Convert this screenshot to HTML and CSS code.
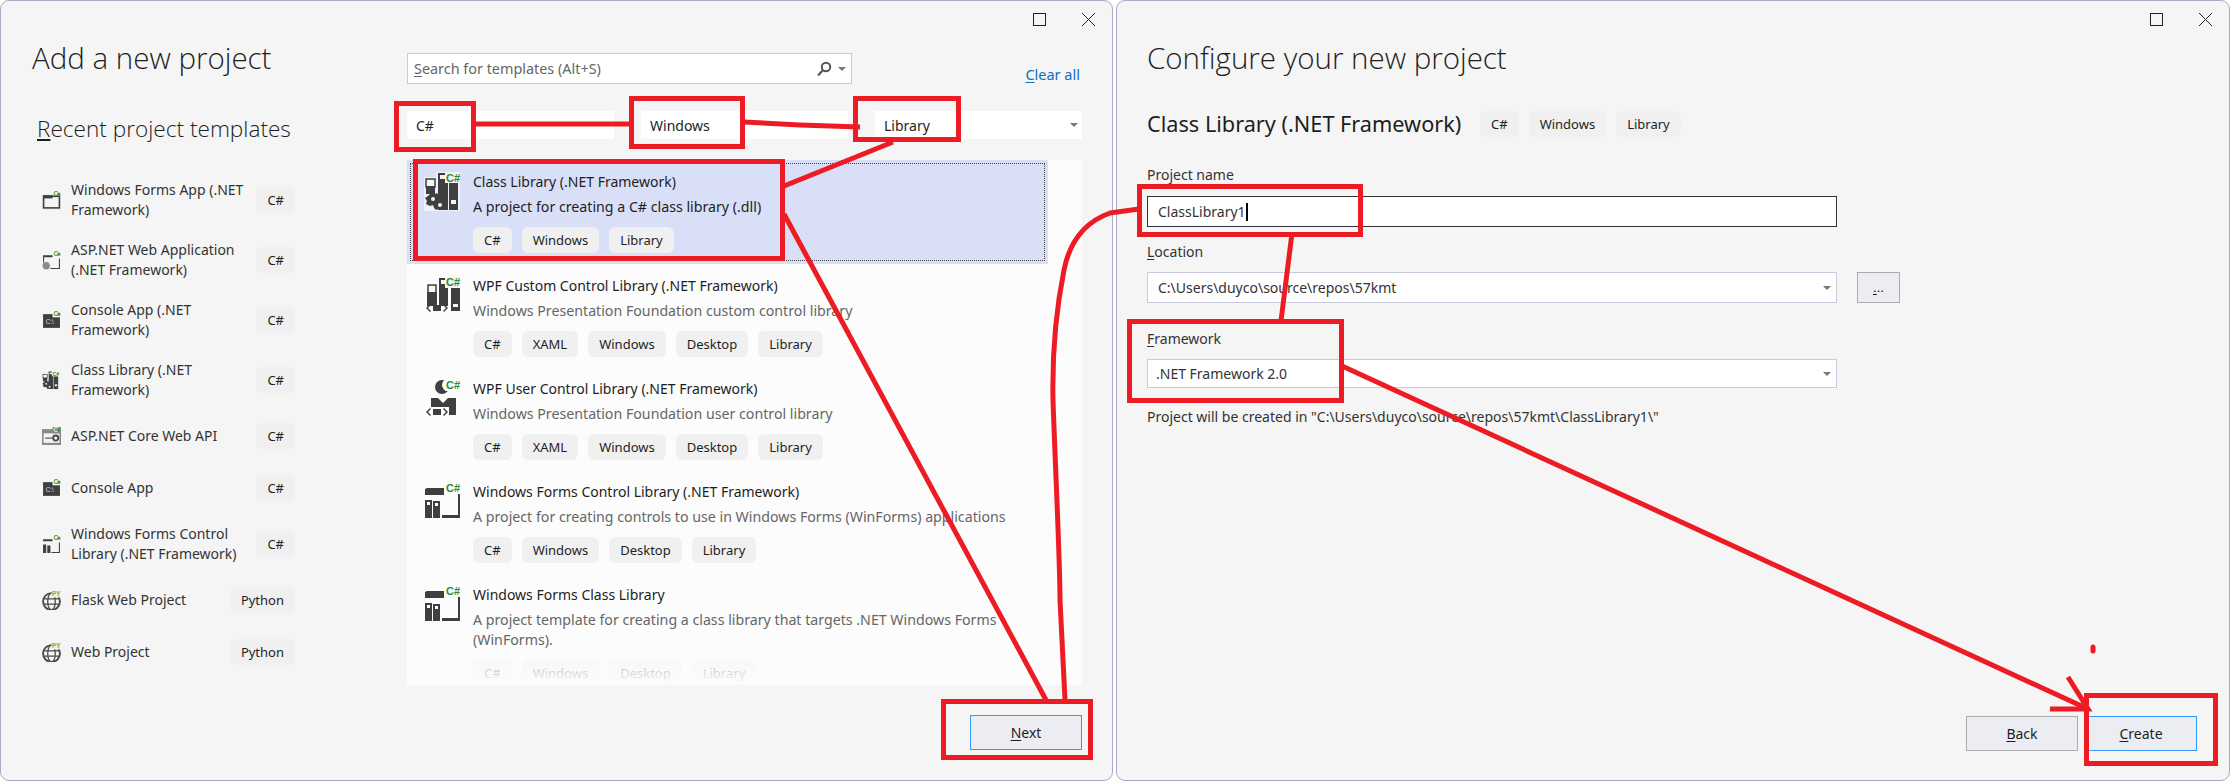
FILE: index.html
```html
<!DOCTYPE html>
<html lang="en">
<head>
  <meta charset="UTF-8" />
  <title>Add a new project</title>
  <link rel="stylesheet" href="styles.css">
</head>
<body>
  <!-- icon set -->
  <svg class="defs" aria-hidden="true">
    <symbol id="lib-lg" viewBox="0 0 40 40">
      <path class="halo" d="M0 5h12V0h24v39H0z"/>
      <rect class="hollow" x="2" y="7" width="9" height="8"/>
      <rect class="ink" x="2" y="14" width="9" height="8"/>
      <path class="ink" d="M14 1h7v2h-5v4h8v31h-10z"/>
      <rect class="ink" x="25" y="11" width="9" height="27"/>
      <rect class="light" x="27" y="28" width="5" height="4"/>
      <path class="ink" d="M8 20l3 2 2-1 2 3 3-1 1 4-2 2 4 1 1 4-3 1-1 3-4-1-2 1-2-2-1-3-3 1-4-2 1-3-2-3 3-2z"/>
      <circle class="light" cx="9" cy="27" r="2"/>
      <circle class="light" cx="16" cy="33" r="2"/>
      <rect class="light" x="21" y="0" width="15" height="11"/>
      <text class="badge" x="22" y="9.5">C#</text>
    </symbol>
    <symbol id="wpf-custom" viewBox="0 0 40 40">
      <rect class="hollow" x="4" y="9" width="8" height="8"/>
      <rect class="ink" x="3" y="16" width="10" height="14"/>
      <path class="ink" d="M15 2h6v2h-4v4h7v22H15z"/>
      <rect class="ink" x="27" y="12" width="9" height="23"/>
      <rect class="light" x="29" y="28" width="5" height="3"/>
      <path class="ink" d="M6 28l-4 4 4 4 1-1-3-3 3-3zM20 28l-1 1 3 3-3 3 1 1 4-4zM9 29h8v6H9z"/>
      <rect class="light" x="21" y="1" width="15" height="11"/>
      <text class="badge" x="22" y="10">C#</text>
    </symbol>
    <symbol id="wpf-user" viewBox="0 0 40 40">
      <circle class="ink" cx="18" cy="8" r="7"/>
      <circle class="plain" cx="24" cy="6" r="6"/>
      <path class="ink" d="M7 19h7l5 5 5-5h8v17H7z"/>
      <path class="plain" d="M0 28h25v9H0z"/>
      <path class="ink" d="M6 29l-4 4 4 4 1-1-3-3 3-3zM20 29l-1 1 3 3-3 3 1 1 4-4zM9 30h8v6H9z"/>
      <rect class="plain" x="21" y="1" width="15" height="11"/>
      <text class="badge" x="22" y="10">C#</text>
    </symbol>
    <symbol id="forms" viewBox="0 0 40 40">
      <path class="ink" d="M1 7l2-1h17v7H1z"/>
      <path class="ink" d="M34 12h2v24H18v-3h16z"/>
      <path class="ink" d="M1 18h7v18H1zM9 19h7v17H9z"/>
      <rect class="plain" x="3" y="20" width="3" height="3"/>
      <rect class="plain" x="11" y="21" width="3" height="3"/>
      <rect class="plain" x="21" y="1" width="15" height="11"/>
      <text class="badge" x="22" y="10">C#</text>
    </symbol>

    <symbol id="sm-window" viewBox="0 0 18 18">
      <rect class="soft" x="0" y="3" width="18" height="15"/>
      <rect class="hollow" x="1.5" y="5" width="15" height="11"/>
      <rect class="ink" x="1" y="4" width="9" height="3"/>
      <text class="badge-sm" x="11" y="5">C</text><circle class="dot" cx="16" cy="3" r="1.5"/>
    </symbol>
    <symbol id="sm-web" viewBox="0 0 18 18">
      <path class="ink" d="M1 4h9v2H2v5H1zM16 7h1v10H8v-1h8z"/>
      <circle class="mid" cx="4" cy="14" r="3.5"/>
      <text class="badge-sm" x="11" y="5">C</text><circle class="dot" cx="16" cy="3" r="1.5"/>
    </symbol>
    <symbol id="sm-console" viewBox="0 0 18 18">
      <rect class="ink" x="1" y="3" width="16" height="13"/>
      <text class="console-txt" x="3.5" y="12">C:\</text>
      <rect class="light" x="10" y="0" width="8" height="6"/>
      <text class="badge-sm" x="11" y="5">C</text><circle class="dot" cx="16" cy="3" r="1.5"/>
    </symbol>
    <symbol id="sm-key" viewBox="0 0 18 18">
      <rect class="mid" x="0" y="2" width="18" height="15"/>
      <rect class="light" x="1.5" y="6" width="15" height="9"/>
      <path class="ink" d="M3 10h7v1H3z"/>
      <circle class="ring" cx="13" cy="10.5" r="2.4"/>
      <rect class="mid" x="10" y="0" width="8" height="6"/>
      <text class="badge-lt" x="11" y="5">C</text><circle class="dot" cx="16" cy="3" r="1.5"/>
    </symbol>
    <symbol id="sm-forms" viewBox="0 0 18 18">
      <path class="ink" d="M1 4h9v2H1zM16 7h1v10H9v-1h7z"/>
      <path class="ink" d="M1 9h3v8H1zM5 10h3v7H5z"/>
      <text class="badge-sm" x="11" y="5">C</text><circle class="dot" cx="16" cy="3" r="1.5"/>
    </symbol>
    <symbol id="sm-globe" viewBox="0 0 18 18">
      <circle class="ring" cx="9" cy="10" r="8"/>
      <ellipse class="ring-thin" cx="9" cy="10" rx="3.6" ry="8"/>
      <path class="ring-thin" d="M1 7.500h16M1 12.500h16"/>
      <rect class="soft" x="9" y="0" width="9" height="6"/>
      <text class="badge-py" x="9.500" y="5">PY</text>
    </symbol>
  </svg>

  <section class="window window-add">
    <div class="win-bar">
      <span class="win-max"></span>
      <svg class="win-close" viewBox="0 0 13 13"><path d="M0 0l13 13M13 0L0 13"/></svg>
    </div>
    <div class="add-body">
      <div class="recent">
        <h1>Add a new project</h1>
        <h2><u>R</u>ecent project templates</h2>
        <ul class="recent-list">
          <li class="recent-item">
            <svg class="sm-icon"><use href="#sm-window"/></svg>
            <span class="recent-name">Windows Forms App (.NET<br>Framework)</span>
            <span class="chip">C#</span>
          </li>
          <li class="recent-item">
            <svg class="sm-icon"><use href="#sm-web"/></svg>
            <span class="recent-name">ASP.NET Web Application<br>(.NET Framework)</span>
            <span class="chip">C#</span>
          </li>
          <li class="recent-item">
            <svg class="sm-icon"><use href="#sm-console"/></svg>
            <span class="recent-name">Console App (.NET<br>Framework)</span>
            <span class="chip">C#</span>
          </li>
          <li class="recent-item">
            <svg class="sm-icon"><use href="#lib-lg"/></svg>
            <span class="recent-name">Class Library (.NET<br>Framework)</span>
            <span class="chip">C#</span>
          </li>
          <li class="recent-item">
            <svg class="sm-icon"><use href="#sm-key"/></svg>
            <span class="recent-name">ASP.NET Core Web API</span>
            <span class="chip">C#</span>
          </li>
          <li class="recent-item">
            <svg class="sm-icon"><use href="#sm-console"/></svg>
            <span class="recent-name">Console App</span>
            <span class="chip">C#</span>
          </li>
          <li class="recent-item">
            <svg class="sm-icon"><use href="#sm-forms"/></svg>
            <span class="recent-name">Windows Forms Control<br>Library (.NET Framework)</span>
            <span class="chip">C#</span>
          </li>
          <li class="recent-item">
            <svg class="sm-icon"><use href="#sm-globe"/></svg>
            <span class="recent-name">Flask Web Project</span>
            <span class="chip">Python</span>
          </li>
          <li class="recent-item">
            <svg class="sm-icon"><use href="#sm-globe"/></svg>
            <span class="recent-name">Web Project</span>
            <span class="chip">Python</span>
          </li>
        </ul>
      </div>

      <div class="browse">
        <div class="search-row">
          <div class="search">
            <span class="search-text"><u>S</u>earch for templates (Alt+S)</span>
            <svg class="search-icon" viewBox="0 0 18 16">
              <circle cx="11" cy="6" r="4.200"/>
              <path d="M8 9l-5 5.500"/>
            </svg>
            <span class="caret"></span>
          </div>
          <a class="clear-all"><u>C</u>lear all</a>
        </div>
        <div class="filters">
          <div class="combo">C#</div>
          <div class="combo">Windows</div>
          <div class="combo">Library<span class="caret"></span></div>
        </div>
        <div class="templates">
          <article class="tpl tpl-selected">
            <svg class="tpl-icon"><use href="#lib-lg"/></svg>
            <div>
              <div class="tpl-name">Class Library (.NET Framework)</div>
              <p class="tpl-desc">A project for creating a C# class library (.dll)</p>
              <div class="chips"><span class="chip">C#</span><span class="chip">Windows</span><span class="chip">Library</span></div>
            </div>
          </article>
          <article class="tpl">
            <svg class="tpl-icon"><use href="#wpf-custom"/></svg>
            <div>
              <div class="tpl-name">WPF Custom Control Library (.NET Framework)</div>
              <p class="tpl-desc tpl-desc-gray">Windows Presentation Foundation custom control library</p>
              <div class="chips"><span class="chip">C#</span><span class="chip">XAML</span><span class="chip">Windows</span><span class="chip">Desktop</span><span class="chip">Library</span></div>
            </div>
          </article>
          <article class="tpl">
            <svg class="tpl-icon"><use href="#wpf-user"/></svg>
            <div>
              <div class="tpl-name">WPF User Control Library (.NET Framework)</div>
              <p class="tpl-desc tpl-desc-gray">Windows Presentation Foundation user control library</p>
              <div class="chips"><span class="chip">C#</span><span class="chip">XAML</span><span class="chip">Windows</span><span class="chip">Desktop</span><span class="chip">Library</span></div>
            </div>
          </article>
          <article class="tpl">
            <svg class="tpl-icon"><use href="#forms"/></svg>
            <div>
              <div class="tpl-name">Windows Forms Control Library (.NET Framework)</div>
              <p class="tpl-desc tpl-desc-gray">A project for creating controls to use in Windows Forms (WinForms) applications</p>
              <div class="chips"><span class="chip">C#</span><span class="chip">Windows</span><span class="chip">Desktop</span><span class="chip">Library</span></div>
            </div>
          </article>
          <article class="tpl">
            <svg class="tpl-icon"><use href="#forms"/></svg>
            <div>
              <div class="tpl-name">Windows Forms Class Library</div>
              <p class="tpl-desc tpl-desc-gray">A project template for creating a class library that targets .NET Windows Forms<br>(WinForms).</p>
              <div class="chips"><span class="chip">C#</span><span class="chip">Windows</span><span class="chip">Desktop</span><span class="chip">Library</span></div>
            </div>
          </article>
        </div>
        <div class="actions">
          <button class="btn btn-primary"><u>N</u>ext</button>
        </div>
      </div>
    </div>
  </section>

  <section class="window window-config">
    <div class="win-bar">
      <span class="win-max"></span>
      <svg class="win-close" viewBox="0 0 13 13"><path d="M0 0l13 13M13 0L0 13"/></svg>
    </div>
    <div class="config-body">
      <h1>Configure your new project</h1>
      <div class="config-sub">
        <h3>Class Library (.NET Framework)</h3>
        <div class="chips"><span class="chip">C#</span><span class="chip">Windows</span><span class="chip">Library</span></div>
      </div>
      <label class="field-label field-name">Project name</label>
      <div class="input input-focus">ClassLibrary1<span class="text-caret"></span></div>
      <label class="field-label"><u>L</u>ocation</label>
      <div class="location-row">
        <div class="input input-combo">C:\Users\duyco\source\repos\57kmt<span class="caret"></span></div>
        <button class="btn-browse"><u>.</u>..</button>
      </div>
      <label class="field-label field-framework"><u>F</u>ramework</label>
      <div class="input input-combo input-framework">.NET Framework 2.0<span class="caret"></span></div>
      <p class="created-in">Project will be created in "C:\Users\duyco\source\repos\57kmt\ClassLibrary1\"</p>
      <div class="actions config-actions">
        <button class="btn"><u>B</u>ack</button>
        <button class="btn btn-primary"><u>C</u>reate</button>
      </div>
    </div>
  </section>

  <!-- red marker drawn over the screenshot -->
  <svg class="markup" viewBox="0 0 2230 782">
    <rect x="396.500" y="103.500" width="77" height="46"/>
    <rect x="631.500" y="98.500" width="111" height="48"/>
    <rect x="855.500" y="98.500" width="103" height="41"/>
    <rect x="415.500" y="161.500" width="367" height="97"/>
    <rect x="943.500" y="701.500" width="147" height="56"/>
    <rect x="1139.500" y="186.500" width="221" height="48"/>
    <rect x="1129.500" y="321.500" width="212" height="79"/>
    <rect x="2086.500" y="695.500" width="129" height="68"/>
    <path d="M474 124H630"/>
    <path d="M744 122L800 125L860 127"/>
    <path d="M893 142L784 186"/>
    <path d="M784 214L1046 700"/>
    <path d="M1139 209L1110 213C1085 222 1070 240 1064 270C1056 310 1052 350 1053 400C1055 460 1060 560 1060 600L1065 700"/>
    <path d="M1292 233L1281 321"/>
    <path d="M1342 366L2088 709"/>
    <path d="M2068 677L2088 709L2050 709"/>
    <path class="blot" d="M2093 647v4"/>
  </svg>
</body>
</html>
```

FILE: styles.css
```css
* {
  box-sizing: border-box;
}

html, body {
  margin: 0;
  padding: 0;
}

body {
  position: relative;
  display: flex;
  width: 2230px;
  height: 782px;
  overflow: hidden;
  background: #fff;
  color: #1e1e1e;
  font-family: "Noto Sans", sans-serif;
  font-size: 14px;
}

h1, h2, h3, p, ul {
  margin: 0;
  padding: 0;
  font-weight: 400;
}

u {
  text-underline-offset: 2px;
}

.defs {
  display: none;
}

/* windows */
.window {
  display: flex;
  flex-direction: column;
  height: 781px;
  background: #f5f5f5;
  border: 1px solid #a9a9c9;
  border-radius: 9px;
}

.window-add {
  width: 1113px;
}

.window-config {
  width: 1114px;
  margin-left: 3px;
}

.win-bar {
  display: flex;
  justify-content: flex-end;
  align-items: flex-start;
  gap: 36px;
  height: 37px;
  padding: 12px 17px 0 0;
  flex-shrink: 0;
}

.win-max {
  width: 13px;
  height: 13px;
  border: 1.5px solid #222;
}

.win-close {
  width: 13px;
  height: 13px;
  fill: none;
  stroke: #222;
  stroke-width: 1;
}

h1 {
  height: 40px;
  margin-top: 2px;
  font-family: "Open Sans", sans-serif;
  font-size: 29.500px;
  font-weight: 300;
  line-height: 36px;
  white-space: nowrap;
}

.add-body {
  display: flex;
  flex: 1;
}

/* recent column */
.recent {
  width: 406px;
  padding-left: 31px;
  flex-shrink: 0;
}

h2 {
  margin: 34px 0 0 5px;
  font-size: 22.600px;
  line-height: 30px;
  font-weight: 300;
  font-family: "Open Sans", sans-serif;
  white-space: nowrap;
}

.recent-list {
  list-style: none;
  margin-top: 26px;
  width: 263px;
}

.recent-item {
  display: flex;
  align-items: center;
  min-height: 52px;
  padding: 10px 0 10px 10px;
}

.sm-icon {
  width: 19px;
  height: 19px;
  margin-right: 10px;
  flex-shrink: 0;
}

.recent-name {
  flex: 1;
  font-size: 14px;
  line-height: 20px;
  white-space: nowrap;
  color: #333;
}

.chip {
  display: inline-block;
  height: 26px;
  padding: 0 11px;
  background: #f0f0f0;
  border-radius: 6px;
  font-size: 13px;
  line-height: 26px;
  white-space: nowrap;
}

/* template browser */
.browse {
  display: flex;
  flex-direction: column;
  width: 675px;
}

.search-row {
  display: flex;
  justify-content: space-between;
  align-items: flex-end;
  margin-top: 15px;
  height: 31px;
}

.search {
  display: flex;
  align-items: center;
  width: 445px;
  height: 31px;
  padding: 0 5px 0 6px;
  background: #fff;
  border: 1px solid #c9c9de;
}

.search-text {
  flex: 1;
  color: #666;
  font-size: 14.400px;
}

.search-icon {
  width: 18px;
  height: 16px;
  margin-right: 5px;
  fill: none;
  stroke: #555;
  stroke-width: 2;
}

.caret {
  width: 0;
  height: 0;
  border-left: 4px solid transparent;
  border-right: 4px solid transparent;
  border-top: 4px solid #777;
}

.clear-all {
  margin-right: 2px;
  color: #0e70c0;
  font-size: 14.500px;
  line-height: 20px;
}

.filters {
  display: grid;
  grid-template-columns: 207px 207px 207px;
  gap: 27px;
  margin-top: 27px;
}

.combo {
  display: flex;
  justify-content: space-between;
  align-items: center;
  height: 28px;
  padding: 0 4px 0 9px;
  background: #fff;
  font-size: 14px;
}

.templates {
  position: relative;
  height: 525px;
  margin-top: 21px;
  overflow: hidden;
  background: #fcfcfc;
}

.templates::after {
  content: "";
  position: absolute;
  left: 0;
  right: 0;
  bottom: 0;
  height: 30px;
  background: linear-gradient(rgba(252, 252, 252, 0.6), #fcfcfc);
}

.tpl {
  display: flex;
  width: 641px;
  height: 103px;
  padding: 12px 0 0 17px;
}

.tpl-selected {
  height: 104px;
  background: #d9dff7;
  outline: 1px dotted #444;
  outline-offset: -4px;
}

.tpl-icon {
  width: 40px;
  height: 40px;
  margin-right: 9px;
  flex-shrink: 0;
}

.tpl-name {
  line-height: 20px;
  font-size: 14px;
  white-space: nowrap;
}

.tpl-desc {
  margin-top: 5px;
  line-height: 20px;
  font-size: 14.200px;
  white-space: nowrap;
}

.tpl-desc-gray {
  color: #666;
}

.chips {
  display: flex;
  gap: 10px;
  margin-top: 10px;
}

.actions {
  display: flex;
  justify-content: flex-end;
  gap: 7px;
  margin-top: 30px;
}

.btn {
  width: 112px;
  height: 35px;
  padding: 0;
  background: #ecedf2;
  border: 1px solid #acacac;
  color: #1e1e1e;
  font-family: inherit;
  font-size: 14px;
}

.btn-primary {
  border-color: #3399ff;
}

/* configure window */
.config-body {
  display: flex;
  flex: 1;
  flex-direction: column;
  padding: 0 32px 29px 30px;
}

.config-sub {
  display: flex;
  align-items: center;
  margin-top: 31px;
}

.config-sub h3 {
  width: 333px;
  font-size: 21.700px;
  line-height: 26px;
  white-space: nowrap;
}

.config-sub .chips {
  margin-top: 0;
}

.field-label {
  display: block;
  height: 20px;
  margin-top: 15px;
  font-size: 14px;
  line-height: 20px;
  color: #333;
}

.field-name {
  margin-top: 28px;
}

.field-framework {
  margin-top: 26px;
}

.input {
  display: flex;
  align-items: center;
  width: 690px;
  height: 31px;
  margin-top: 10px;
  padding: 0 5px 0 10px;
  background: #fff;
  border: 1px solid #c9c9de;
  font-size: 14px;
  white-space: nowrap;
  color: #333;
}

.input-focus {
  margin-top: 11px;
  border-color: #333;
}

.input-combo {
  justify-content: space-between;
}

.input-framework {
  height: 29px;
  padding-left: 8px;
}

.text-caret {
  width: 2px;
  height: 18px;
  margin-right: auto;
  background: #000;
}

.location-row {
  display: flex;
  gap: 20px;
}

.btn-browse {
  width: 43px;
  height: 31px;
  margin-top: 10px;
  padding: 0;
  background: #ecedf2;
  border: 1px solid #acacac;
  font-size: 13px;
}

.created-in {
  margin-top: 19px;
  line-height: 20px;
  font-size: 14px;
  white-space: nowrap;
  color: #333;
}

.config-actions {
  margin-top: auto;
}

/* icon paints */
.ink { fill: #3f3f3f; }
.light { fill: #f4f4f4; }
.plain { fill: #fcfcfc; }
.soft { fill: #eeeeee; }
.mid { fill: #8a8a8a; }
.halo { fill: #eef0fb; }
.hollow { fill: #f4f4f4; stroke: #3f3f3f; stroke-width: 1.500; }
.ring { fill: none; stroke: #4a4a4a; stroke-width: 1.800; }
.ring-thin { fill: none; stroke: #4a4a4a; stroke-width: 1.200; }
.dot { fill: #3f9a3f; }

.badge {
  fill: #2f8a2f;
  font-family: "Liberation Sans", sans-serif;
  font-size: 11px;
  font-weight: 700;
}

.badge-sm, .badge-lt {
  fill: #3f9a3f;
  font-family: "Liberation Sans", sans-serif;
  font-size: 6px;
  font-weight: 700;
}

.badge-lt {
  fill: #d8f0d8;
}

.badge-py {
  fill: #8aa82a;
  font-family: "Liberation Sans", sans-serif;
  font-size: 6px;
  font-weight: 700;
}

.console-txt {
  fill: #ddd;
  font-family: "Liberation Sans", sans-serif;
  font-size: 6px;
}

/* marker layer */
.markup {
  position: absolute;
  left: 0;
  top: 0;
  width: 2230px;
  height: 782px;
  fill: none;
  stroke: #ed1c24;
  stroke-width: 5;
  pointer-events: none;
}

.blot {
  stroke-linecap: round;
}
```
